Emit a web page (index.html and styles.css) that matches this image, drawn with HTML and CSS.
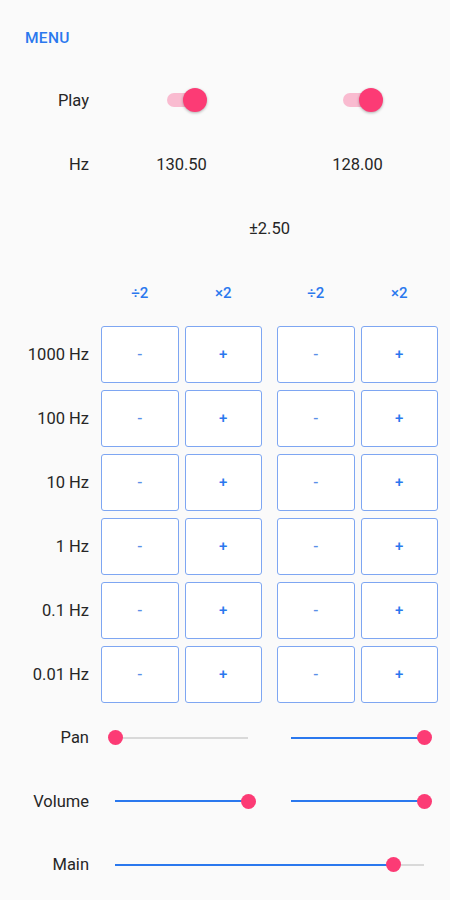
FILE: index.html
```html
<!DOCTYPE html>
<html lang="en">
<head>
  <meta charset="UTF-8" />
  <title>Binaural Tone</title>
  <link rel="stylesheet" href="styles.css">
</head>
<body>
  <div class="topbar">
    <button class="menu">MENU</button>
  </div>

  <div class="row">
    <div class="label">Play</div>
    <div class="pair center"><div class="toggle on"><span class="knob"></span></div></div>
    <div class="pair center"><div class="toggle on"><span class="knob"></span></div></div>
  </div>

  <div class="row">
    <div class="label">Hz</div>
    <div class="pair center">130.50</div>
    <div class="pair center">128.00</div>
  </div>

  <div class="row">
    <div class="label"></div>
    <div class="wide center">±2.50</div>
  </div>

  <div class="row head">
    <div class="label"></div>
    <div class="pair">
      <div class="cell head-btn">÷2</div>
      <div class="cell head-btn">×2</div>
    </div>
    <div class="pair">
      <div class="cell head-btn">÷2</div>
      <div class="cell head-btn">×2</div>
    </div>
  </div>

  <div id="steps"></div>

  <div class="row slide-row">
    <div class="label">Pan</div>
    <div class="pair"><div class="slider" data-v="0"></div></div>
    <div class="pair"><div class="slider" data-v="1"></div></div>
  </div>

  <div class="row slide-row">
    <div class="label">Volume</div>
    <div class="pair"><div class="slider" data-v="1"></div></div>
    <div class="pair"><div class="slider" data-v="1"></div></div>
  </div>

  <div class="row slide-row">
    <div class="label">Main</div>
    <div class="wide"><div class="slider" data-v="0.9"></div></div>
  </div>

  <script>
    const steps = ['1000 Hz', '100 Hz', '10 Hz', '1 Hz', '0.1 Hz', '0.01 Hz'];
    const stepsEl = document.getElementById('steps');

    steps.forEach(s => {
      const row = document.createElement('div');
      row.className = 'row step';
      row.innerHTML =
        `<div class="label">${s}</div>` +
        `<div class="pair"><button class="btn minus">-</button><button class="btn">+</button></div>` +
        `<div class="pair"><button class="btn minus">-</button><button class="btn">+</button></div>`;
      stepsEl.appendChild(row);
    });

    document.querySelectorAll('.slider').forEach(el => {
      const v = parseFloat(el.dataset.v);
      el.innerHTML = `<div class="fill" style="width:${v * 100}%"></div><span class="thumb" style="left:${v * 100}%"></span>`;
    });
  </script>
</body>
</html>
```

FILE: styles.css
```css
body {
  margin: 0;
  background: #fafafa;
  font-family: Roboto, "Noto Sans", Arial, sans-serif;
  font-size: 16.5px;
  color: #262626;
}
.topbar {
  height: 62px;
  padding: 6px 0 0 14px;
  display: flex;
  align-items: center;
}
.menu {
  background: none;
  border: none;
  color: #2a78ee;
  font-family: inherit;
  font-size: 15.5px;
  font-weight: 500;
  letter-spacing: 0.3px;
  padding: 4px 11px 2px;
}
.row {
  display: flex;
  align-items: center;
  height: 64px;
}
.row.head {
  height: 62px;
}
.label {
  width: 89px;
  margin-right: 12px;
  text-align: right;
  flex: none;
}
.pair {
  width: 161px;
  display: flex;
  gap: 6px;
}
.pair + .pair {
  margin-left: 15px;
}
.wide {
  width: 337px;
}
.center {
  justify-content: center;
  text-align: center;
}
.cell {
  flex: 1;
  text-align: center;
}
.head-btn {
  padding-top: 4px;
  color: #2a78ee;
  font-size: 15px;
  font-weight: 500;
}
.btn {
  flex: 1;
  height: 57px;
  background: #fff;
  border: 1.5px solid #7ea6f2;
  border-radius: 3px;
  color: #2a78ee;
  font-family: inherit;
  font-size: 15px;
  font-weight: 500;
  padding: 0;
}
.btn.minus {
  color: #5a8fe8;
}
.toggle {
  position: relative;
  width: 36px;
  height: 14px;
  margin-left: 7px;
  border-radius: 7px;
  background: #f9bbd0;
}
.toggle .knob {
  position: absolute;
  right: -4px;
  top: -5px;
  width: 24px;
  height: 24px;
  border-radius: 50%;
  background: #fc3b75;
  box-shadow: 0 1px 3px rgba(0, 0, 0, 0.3);
}
.slide-row {
  height: 63.5px;
}
.slider {
  position: relative;
  height: 2px;
  margin: 0 14px;
  background: #d9d9d9;
  flex: 1;
}
.slider .fill {
  height: 100%;
  background: #2a78ee;
}
.slider .thumb {
  position: absolute;
  top: 50%;
  width: 15px;
  height: 15px;
  margin: -7.5px 0 0 -7.5px;
  border-radius: 50%;
  background: #fc3b75;
}
```
